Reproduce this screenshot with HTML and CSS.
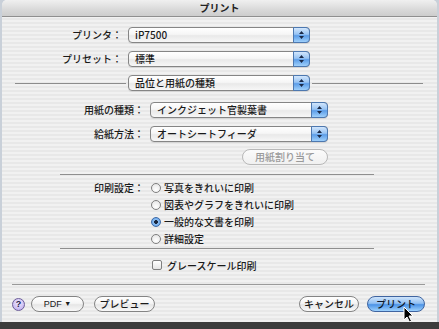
FILE: index.html
```html
<!DOCTYPE html>
<html lang="ja">
<head>
  <meta charset="UTF-8" />
  <title>プリント</title>
  <link rel="stylesheet" href="styles.css">
</head>
<body>
  <div class="window">
    <div class="titlebar">プリント</div>

    <div class="content">
      <div class="row top-row">
        <span class="label">プリンタ：</span>
        <div class="popup wide"><span class="popup-text">iP7500</span><span class="stepper"><svg width="7" height="10" viewBox="0 0 7 10"><path d="M3.5 1 L6 4 H1 Z M3.5 9 L6 6 H1 Z" fill="#1b2a48"/></svg></span></div>
      </div>
      <div class="row top-row">
        <span class="label">プリセット：</span>
        <div class="popup wide"><span class="popup-text">標準</span><span class="stepper"><svg width="7" height="10" viewBox="0 0 7 10"><path d="M3.5 1 L6 4 H1 Z M3.5 9 L6 6 H1 Z" fill="#1b2a48"/></svg></span></div>
      </div>
      <div class="divider">
        <span class="rule"></span>
        <div class="popup wide"><span class="popup-text">品位と用紙の種類</span><span class="stepper"><svg width="7" height="10" viewBox="0 0 7 10"><path d="M3.5 1 L6 4 H1 Z M3.5 9 L6 6 H1 Z" fill="#1b2a48"/></svg></span></div>
        <span class="rule"></span>
      </div>

      <div class="row paper-row first">
        <span class="label">用紙の種類：</span>
        <div class="popup narrow"><span class="popup-text">インクジェット官製葉書</span><span class="stepper"><svg width="7" height="10" viewBox="0 0 7 10"><path d="M3.5 1 L6 4 H1 Z M3.5 9 L6 6 H1 Z" fill="#1b2a48"/></svg></span></div>
      </div>
      <div class="row paper-row">
        <span class="label">給紙方法：</span>
        <div class="popup narrow"><span class="popup-text">オートシートフィーダ</span><span class="stepper"><svg width="7" height="10" viewBox="0 0 7 10"><path d="M3.5 1 L6 4 H1 Z M3.5 9 L6 6 H1 Z" fill="#1b2a48"/></svg></span></div>
      </div>
      <div class="assign-row">
        <button class="btn disabled">用紙割り当て</button>
      </div>

      <div class="sep"></div>

      <div class="quality">
        <span class="label">印刷設定：</span>
        <div class="radios">
          <div class="radio-row"><span class="radio"></span>写真をきれいに印刷</div>
          <div class="radio-row"><span class="radio"></span>図表やグラフをきれいに印刷</div>
          <div class="radio-row"><span class="radio on"></span>一般的な文書を印刷</div>
          <div class="radio-row"><span class="radio"></span>詳細設定</div>
        </div>
      </div>

      <div class="sep after-radios"></div>

      <div class="gray-row">
        <span class="checkbox"></span>グレースケール印刷
      </div>
    </div>

    <div class="footer">
      <span class="help">?</span>
      <button class="btn pdf">PDF <span class="arrow">▼</span></button>
      <button class="btn preview">プレビュー</button>
      <span class="spacer"></span>
      <button class="btn cancel">キャンセル</button>
      <button class="btn default">プリント</button>
    </div>

    <svg class="cursor" width="11" height="17" viewBox="0 0 11 17">
      <path d="M1 1 V14 L4 11 L6.5 16 L8.5 15 L6 10 H10 Z" fill="#000" stroke="#fff" stroke-width="1" stroke-linejoin="round"/>
    </svg>
  </div>
</body>
</html>
```

FILE: styles.css
```css
html, body {
  margin: 0;
  padding: 0;
}
body {
  width: 439px;
  height: 329px;
  overflow: hidden;
  background: linear-gradient(#c9d0d9 0, #c9d0d9 322px, #3d3d3d 322px);
  font-family: "Noto Sans CJK JP", "Liberation Sans", sans-serif;
  font-size: 10px;
  font-weight: 500;
  color: #1a1a1a;
}
.window {
  position: relative;
  margin-left: 2px;
  width: 435px;
  height: 322px;
  border-radius: 5px 5px 0 0;
  overflow: hidden;
  display: flex;
  flex-direction: column;
  background: repeating-linear-gradient(#f1f1f1 0, #f1f1f1 2px, #e8e8e8 2px, #e8e8e8 4px);
}
.titlebar {
  height: 16px;
  line-height: 16px;
  text-align: center;
  font-weight: bold;
  color: #222;
  background: linear-gradient(#f0f0f0, #d9d9d9 60%, #cdcdcd);
  border-bottom: 1px solid #8f8f8f;
}
.content {
  flex: 1;
  padding-top: 10px;
  display: flex;
  flex-direction: column;
}
.row {
  display: flex;
  align-items: center;
  height: 16px;
}
.label {
  text-align: right;
  flex: none;
  line-height: 16px;
}
.top-row {
  margin-bottom: 8px;
}
.top-row .label {
  width: 120px;
  margin-right: 6px;
}
.popup {
  display: flex;
  align-items: center;
  box-sizing: border-box;
  height: 16px;
  border: 1px solid #858585;
  border-radius: 4px;
  background: linear-gradient(#ffffff, #f6f6f6 45%, #e9e9e9 55%, #f7f7f7);
  box-shadow: 0 1px 0 rgba(0, 0, 0, 0.08);
}
.popup.wide {
  width: 182px;
}
.popup.narrow {
  width: 178px;
}
.popup-text {
  flex: 1;
  padding-left: 6px;
  line-height: 14px;
  white-space: nowrap;
}
.stepper {
  align-self: stretch;
  width: 15px;
  margin: -1px -1px -1px 0;
  border: 1px solid #4d78b0;
  border-radius: 0 4px 4px 0;
  background: linear-gradient(#d2e6fc, #97c3f3 45%, #5c9de8 55%, #9fd0fb);
  display: flex;
  align-items: center;
  justify-content: center;
}
.divider {
  display: flex;
  align-items: center;
  height: 16px;
  padding: 0 14px 0 13px;
}
.divider .rule {
  flex: 1;
  height: 1px;
  background: #8c8c8c;
}
.divider .popup {
  margin: 0 2px;
}
.paper-row {
  margin-bottom: 8px;
}
.paper-row.first {
  margin-top: 11px;
}
.paper-row .label {
  width: 142px;
  margin-right: 6px;
}
.assign-row {
  display: flex;
  padding-left: 240px;
  margin-top: -1px;
}
.btn {
  box-sizing: border-box;
  height: 16px;
  padding: 0;
  border: 1px solid #848484;
  border-radius: 8px;
  background: linear-gradient(#ffffff, #f5f5f5 45%, #e6e6e6 55%, #f8f8f8);
  font-family: inherit;
  font-size: 10px;
  font-weight: 500;
  color: #1a1a1a;
  line-height: 14px;
  text-align: center;
}
.btn.disabled {
  width: 86px;
  color: #9a9a9a;
  border-color: #b8b8b8;
  background: linear-gradient(#fbfbfb, #f0f0f0);
}
.sep {
  margin: 9px 63px 0 58px;
  height: 1px;
  background: #8f8f8f;
}
.sep.after-radios {
  margin-top: 1px;
}
.quality {
  display: flex;
  margin-top: 4px;
}
.quality .label {
  width: 142px;
  margin-right: 7px;
  line-height: 17px;
}
.radio-row {
  display: flex;
  align-items: center;
  height: 17px;
}
.radio {
  box-sizing: border-box;
  width: 10px;
  height: 10px;
  margin-right: 3px;
  border: 1px solid #7f7f7f;
  border-radius: 50%;
  background: radial-gradient(circle at 50% 70%, #ffffff, #e2e2e2);
}
.radio.on {
  border-color: #3e6aa6;
  background: radial-gradient(circle, #1a2840 0, #1a2840 1.6px, #8fc0f2 2.2px, #4d92e3);
}
.gray-row {
  display: flex;
  align-items: center;
  height: 16px;
  margin-top: 8px;
  padding-left: 150px;
}
.checkbox {
  box-sizing: border-box;
  width: 10px;
  height: 10px;
  margin-right: 5px;
  border: 1px solid #7f7f7f;
  border-radius: 2px;
  background: linear-gradient(#ffffff, #e4e4e4);
}
.footer {
  height: 38px;
  margin: 0 12px 0 10px;
  border-top: 1px solid #9a9a9a;
  display: flex;
  align-items: center;
  padding-top: 1px;
  box-sizing: border-box;
}
.help {
  width: 13px;
  height: 13px;
  box-sizing: border-box;
  border: 1px solid #6c5d9a;
  border-radius: 50%;
  background: radial-gradient(circle at 50% 35%, #efe8ff, #b9a7ec);
  font-family: "Liberation Sans", sans-serif;
  font-weight: bold;
  font-size: 9px;
  line-height: 11px;
  text-align: center;
  color: #1d1a4a;
  margin-right: 6px;
}
.btn.pdf {
  width: 53px;
  font-family: "Liberation Sans", sans-serif;
  font-size: 9px;
}
.btn.pdf .arrow {
  font-size: 7px;
  vertical-align: 1px;
}
.btn.preview {
  width: 61px;
  margin-left: 10px;
}
.spacer {
  flex: 1;
}
.btn.cancel {
  width: 60px;
  margin-right: 8px;
}
.btn.default {
  width: 58px;
  border-color: #3f64a0;
  background: linear-gradient(#cfe4fb, #92c0f2 45%, #4c93e6 55%, #9ed2fd);
  color: #0d1626;
}
.cursor {
  position: absolute;
  left: 401px;
  top: 306px;
}
```
